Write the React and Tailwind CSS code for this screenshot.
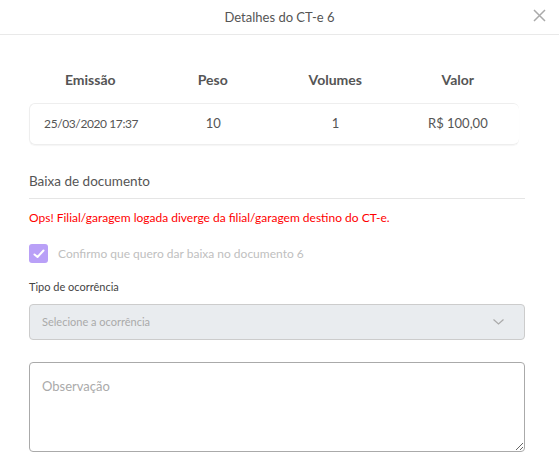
import React from 'react';

const cols = [
  { label: 'Emissão', value: '25/03/2020 17:37', small: true },
  { label: 'Peso', value: '10' },
  { label: 'Volumes', value: '1' },
  { label: 'Valor', value: 'R$ 100,00' },
];

const App = () => {
  return (
    <div className="w-[559px] h-[469px] bg-white overflow-hidden text-[#555]" style={{ fontFamily: 'Lato, "Open Sans", sans-serif' }}>
      {/* Header */}
      <div className="relative h-[35px] border-b border-[#e9e9e9] flex items-center justify-center">
        <span className="text-[13px] leading-[20px] text-[#555]">Detalhes do CT-e 6</span>
        <button className="absolute right-[13px] top-[9px] text-[#aaa]">
          <svg width="13" height="13" viewBox="0 0 13 13" fill="none" stroke="currentColor" strokeWidth="1.5">
            <path d="M1 1 L12 12 M12 1 L1 12" />
          </svg>
        </button>
      </div>

      <div className="pl-[29px] pr-[34px]">
        {/* Table */}
        <div className="w-[490px] mt-[35px]">
          <div className="grid grid-cols-4 text-center text-[14px] leading-[20px] font-bold text-[#555]">
            {cols.map((c) => (
              <div key={c.label}>{c.label}</div>
            ))}
          </div>
          <div className="grid grid-cols-4 text-center text-[13px] text-[#555] mt-[13px] h-[42px] items-center rounded-[6px] border border-[#eee] border-r-0 shadow-[0_1px_1px_rgba(0,0,0,0.04)]">
            {cols.map((c) => (
              <div key={c.label} className={c.small ? 'text-[12px] tracking-[-0.4px]' : ''}>
                {c.value}
              </div>
            ))}
          </div>
        </div>

        {/* Baixa */}
        <div className="mt-[26px] text-[13.5px] leading-[20px] text-[#555] pb-[7px] border-b border-[#e5e5e5]">Baixa de documento</div>
        <div className="mt-[10px] text-[12px] leading-[18px] text-[#f00]">Ops! Filial/garagem logada diverge da filial/garagem destino do CT-e.</div>

        <div className="mt-[17px] flex items-center gap-[10px]">
          <div className="w-[19px] h-[19px] rounded-[3px] bg-[#b9a0f7] flex items-center justify-center">
            <svg width="12" height="10" viewBox="0 0 12 10" fill="none" stroke="white" strokeWidth="2" strokeLinecap="round" strokeLinejoin="round">
              <path d="M1.5 5.5 L4.5 8 L10.5 1.5" />
            </svg>
          </div>
          <span className="text-[12px] leading-[19px] text-[#c0c0c0]">Confirmo que quero dar baixa no documento 6</span>
        </div>

        <div className="mt-[16px] text-[11px] leading-[16px] text-[#444]">Tipo de ocorrência</div>
        <div className="mt-[9px] h-[36px] rounded-[4px] border border-[#ccc] bg-[#e9ecef] flex items-center justify-between pl-[12px] pr-[20px]">
          <span className="text-[11px] text-[#aaa]">Selecione a ocorrência</span>
          <svg width="11" height="6" viewBox="0 0 11 6" fill="none" stroke="#aaa" strokeWidth="1.2">
            <path d="M0.5 0.5 L5.5 5 L10.5 0.5" />
          </svg>
        </div>

        <textarea
          className="mt-[22px] block w-full h-[90px] rounded-[4px] border border-[#aaa] px-[12px] py-[14px] text-[13px] text-[#555] placeholder:text-[#aaa] resize-y outline-none"
          placeholder="Observação"
        />
      </div>
    </div>
  );
};

export default App;
